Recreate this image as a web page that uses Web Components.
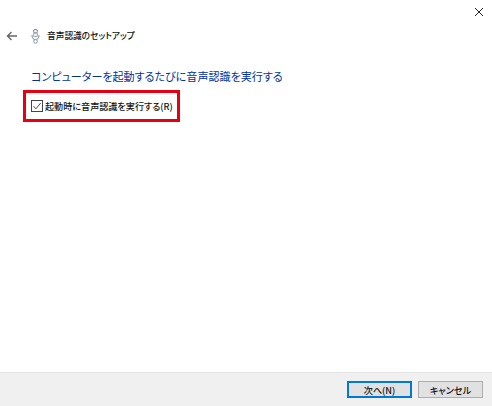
<!DOCTYPE html>
<html lang="ja">
<head>
<meta charset="utf-8">
<style>
  html, body { margin: 0; height: 100%; background: #fff; }
  body { font-family: "Noto Sans CJK JP", "Liberation Sans", sans-serif; overflow: hidden; font-feature-settings: "palt"; }
</style>
</head>
<body>
<wizard-dialog>
  <span slot="title">音声認識のセットアップ</span>
  <span slot="heading">コンピューターを起動するたびに音声認識を実行する</span>
  <check-option label="起動時に音声認識を実行する(R)" checked></check-option>
  <wizard-button slot="footer" default>次へ(N)</wizard-button>
  <wizard-button slot="footer">キャンセル</wizard-button>
</wizard-dialog>
<script>
class WizardDialog extends HTMLElement {
  constructor() {
    super();
    this.attachShadow({ mode: "open" });
    this.shadowRoot.innerHTML = `
<style>
  :host { display: flex; flex-direction: column; height: 406px; width: 492px; color: #222; }
  .close { display: flex; justify-content: flex-end; height: 26px; padding: 7px 8px 0 0; box-sizing: border-box; }
  .nav { display: flex; align-items: center; height: 20px; padding-left: 6px; }
  .nav .mic { margin-left: 13px; margin-right: 7px; }
  .title { font-size: 8.7px; line-height: 20px; color: #111; font-weight: 500; }
  main { flex: 1; padding: 22px 0 0 31px; }
  .heading { font-size: 11.05px; line-height: 16px; color: #003399; margin-bottom: 13px; }
  footer { height: 33px; background: #f0f0f0; border-top: 1px solid #e4e4e4; display: flex; justify-content: flex-end; align-items: center; gap: 6px; padding: 0 9px 0 0; }
</style>
<div class="close">
  <svg width="10" height="10" viewBox="0 0 10 10"><path d="M1 1l8 8M9 1l-8 8" stroke="#222" stroke-width="1" fill="none"/></svg>
</div>
<div class="nav">
  <svg width="12" height="10" viewBox="0 0 12 10"><path d="M11 5H1.5M5.5 1L1.5 5l4 4" stroke="#666" stroke-width="1.4" fill="none"/></svg>
  <!-- mic: stacked rings, the capsule has a pale centre in the reference -->
  <svg class="mic" width="9" height="15" viewBox="0 0 9 15" fill="none">
    <rect x="2.5" y=".5" width="4" height="3.6" rx="1.6" fill="#eef1f6" stroke="#7a8494"/>
    <rect x="2.5" y="4.1" width="4" height="3.6" rx="1.2" fill="#eef1f6" stroke="#8d97a8"/>
    <path d="M1 6c0 3.4 1.2 4.6 3.5 4.6S8 9.4 8 6" stroke="#7f8a9c"/>
    <rect x="2.8" y="10.6" width="3.4" height="3.6" rx="1.4" fill="#fff" stroke="#8d97a8"/>
  </svg>
  <span class="title"><slot name="title"></slot></span>
</div>
<main>
  <div class="heading"><slot name="heading"></slot></div>
  <slot></slot>
</main>
<footer><slot name="footer"></slot></footer>`;
  }
}
customElements.define("wizard-dialog", WizardDialog);

class CheckOption extends HTMLElement {
  constructor() {
    super();
    this.attachShadow({ mode: "open" });
    this.shadowRoot.innerHTML = `
<style>
  :host { display: block; position: relative; }
  .row { display: flex; align-items: center; gap: 2px; height: 18px; font-size: 9.1px; font-weight: 500; color: #111; }
  .box { width: 10px; height: 10px; border: 1px solid #444; display: block; }
  .mark { position: absolute; left: -8px; top: -7px; width: 151px; height: 26px; border: 3px solid #e60012; pointer-events: none; }
</style>
<div class="row">
  <svg class="box" viewBox="0 0 10 10"><path d="M1.5 5.2l2.4 2.6L8.7 2" stroke="#333" stroke-width=".9" fill="none"/></svg>
  <span class="label"></span>
</div>
<div class="mark"></div>`;
    this.shadowRoot.querySelector(".label").textContent = this.getAttribute("label");
  }
}
customElements.define("check-option", CheckOption);

class WizardButton extends HTMLElement {
  constructor() {
    super();
    this.attachShadow({ mode: "open" });
    this.shadowRoot.innerHTML = `
<style>
  :host { display: block; }
  .btn { width: 63px; height: 15px; display: flex; align-items: center; justify-content: center; font-size: 9.1px; font-weight: 500; color: #111; background: #e1e1e1; border: 1px solid #adadad; }
  :host([default]) .btn { border-color: #0078d7; box-shadow: inset 0 0 0 1px #0078d7; }
</style>
<div class="btn"><slot></slot></div>`;
  }
}
customElements.define("wizard-button", WizardButton);
</script>
</body>
</html>
